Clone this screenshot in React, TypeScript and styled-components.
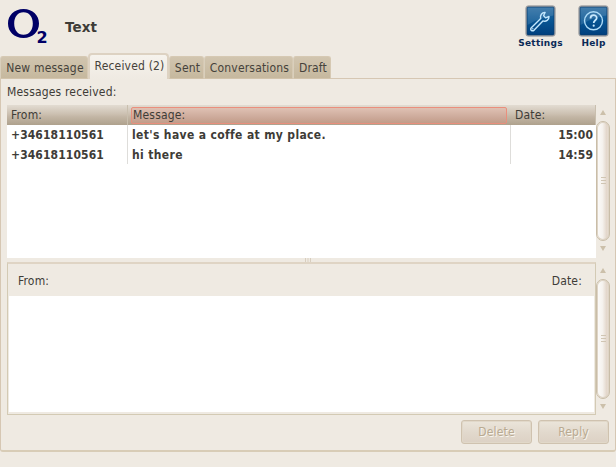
import React from "react";
import styled, { createGlobalStyle, css } from "styled-components";

const Global = createGlobalStyle`
  * { box-sizing: border-box; }
  body { margin: 0; background: #efeae2; overflow: hidden; }
`;

const Window = styled.main`
  width: 616px;
  height: 467px;
  display: flex;
  flex-direction: column;
  background: #efeae2;
  color: #3e3c37;
  font: 12px/20px "DejaVu Sans Condensed", "DejaVu Sans", sans-serif;
  letter-spacing: 0.18px;
  white-space: nowrap;
`;

const Header = styled.header`
  height: 53px;
  flex: none;
  display: flex;
  align-items: flex-start;
`;

const Logo = styled.svg`
  width: 50px;
  height: 50px;
  display: block;

  text { font: bold 16px "DejaVu Sans", sans-serif; letter-spacing: 0; }
`;

const Title = styled.h1`
  flex: 1;
  margin: 17px 0 0 15px;
  font: bold 13.5px/20px "DejaVu Sans", sans-serif;
  letter-spacing: 0.1px;
`;

const Action = styled.button<{ $width: number }>`
  width: ${(p) => p.$width}px;
  padding: 5px 0 0;
  border: 0;
  background: none;
  display: flex;
  flex-direction: column;
  align-items: center;
  color: #0b2a57;
  font: bold 9px/12px "DejaVu Sans", sans-serif;
  letter-spacing: 0.25px;

  svg { display: block; }
`;

const Tabs = styled.nav`
  height: 26px;
  flex: none;
  display: flex;
  align-items: flex-end;
  position: relative;
  z-index: 1;
`;

const Tab = styled.button<{ $width: number; $active?: boolean }>`
  width: ${(p) => p.$width}px;
  height: 23px;
  padding: 1px 0 0 2px;
  border: 1px solid #d6c9b3;
  border-left-color: #d9cfbc;
  border-bottom-color: #d2c3ab;
  border-radius: 3px 3px 0 0;
  background: linear-gradient(#d1c5af, #c6b89e);
  color: #45423b;
  font: inherit;
  letter-spacing: inherit;
  line-height: 20px;
  text-align: center;
  ${(p) =>
    p.$active &&
    css`
      height: 26px;
      padding: 0 0 3px 2px;
      border: 2px solid #ddd2c2;
      border-bottom: 0;
      border-radius: 4px 4px 0 0;
      background: linear-gradient(#f6f3ed, #efeae2);
    `}
`;

const Page = styled.section`
  height: 374px;
  flex: none;
  margin-top: -1px;
  padding: 3px 5px 0 5px;
  border: 1px solid #d6c7b3;
  border-bottom: 2px solid #d8ccb6;
  border-radius: 0 0 3px 3px;
`;

const Caption = styled.div`
  height: 23px;
  padding-left: 1px;
`;

const Split = styled.div`
  display: flex;
`;

const List = styled.div`
  width: 589px;
  height: 153px;
  margin-left: 1px;
  background: #fff;
`;

const ListHead = styled.div`
  height: 20px;
  display: flex;
  background: linear-gradient(#e2dcd2, #ccc0b1 45%, #c2b5a4 60%, #aea18d);
`;

const HeadCell = styled.div<{ $width: number }>`
  width: ${(p) => p.$width}px;
  padding-left: 4px;
  border-right: 1px solid #c9bfae;
`;

const HotCell = styled.div`
  width: 376px;
  height: 17px;
  margin: 2px 4px 0 3px;
  padding-left: 1px;
  border: 1px solid #ea8f7d;
  border-radius: 2px;
  background: linear-gradient(#dfc1b3, #cdaa9b 60%, #c29d89);
  line-height: 15px;
`;

const Row = styled.div`
  height: 19.5px;
  display: flex;
  font-weight: bold;
`;

const Cell = styled.div<{ $width: number; $right?: boolean; $spacing?: number }>`
  width: ${(p) => p.$width}px;
  padding: 0 3px 0 4px;
  border-right: ${(p) => (p.$right ? "0" : "1px solid #deddda")};
  text-align: ${(p) => (p.$right ? "right" : "left")};
  letter-spacing: ${(p) => p.$spacing ?? 0.1}px;
`;

const Scroll = styled.div<{ $top: number }>`
  width: 14px;
  height: 152px;
  display: flex;
  flex-direction: column;
  align-items: center;
  justify-content: space-between;
  padding: ${(p) => p.$top}px 0 ${(p) => 11 - p.$top}px;
`;

const Arrow = styled.i<{ $down?: boolean }>`
  border: 3px solid transparent;
  ${(p) =>
    p.$down
      ? "border-top: 5px solid #ccc0aa; border-bottom: 0;"
      : "border-bottom: 5px solid #ccc0aa; border-top: 0;"}
`;

const Thumb = styled.div`
  width: 14px;
  height: 120px;
  display: flex;
  align-items: center;
  justify-content: center;
  border: 1px solid #c9bda8;
  border-radius: 7px;
  box-shadow: inset 0 0 0 1px #ded4c5;
  background: linear-gradient(90deg, #fcfbfa, #f5f2ee 45%, #e3d7cb 80%, #e8dfd5);
`;

const Grip = styled.span`
  width: 5px;
  height: 7px;
  border: solid #d0c5b3;
  border-width: 1px 0;
  display: flex;
  align-items: center;

  &::after { content: ""; width: 5px; height: 1px; background: #d0c5b3; }
`;

const Divider = styled.div`
  width: 589px;
  height: 4px;
  margin-left: 1px;
  padding-left: 298px;
  display: flex;
  gap: 1px;

  i { width: 1px; height: 4px; background: #d8cebf; }
  i:nth-child(2) { width: 2px; background: #e5ddd1; }
`;

const Detail = styled.div`
  width: 589px;
  height: 153px;
  margin-left: 1px;
  padding: 0 1px 1px;
  border: 1px solid #d3cab4;
  border-top: 2px solid #dfd4c4;
`;

const DetailHead = styled.div`
  height: 32px;
  padding: 7px 12px 0 9px;
  display: flex;
  justify-content: space-between;
`;

const Body = styled.div`
  height: 116px;
  background: #fff;
`;

const Buttons = styled.div`
  display: flex;
  justify-content: flex-end;
  gap: 6px;
  padding: 5px 1px 0 0;
`;

const Push = styled.button`
  width: 71px;
  height: 24px;
  padding: 0 0 1px;
  border: 1px solid #cfc2af;
  border-radius: 3px;
  box-shadow: inset 0 0 0 1px #e1d8c9;
  background: linear-gradient(#ebe5da, #e1d8cc 55%, #dcd1c4);
  color: #b9aa91;
  text-shadow: 1px 1px #f8f5ee;
  font: inherit;
  letter-spacing: inherit;
`;

const messages = [
  { from: "+34618110561", text: "let's have a coffe at my place.", date: "15:00" },
  { from: "+34618110561", text: "hi there", date: "14:59" },
];

const tabs = [
  { label: "New message", width: 88 },
  { label: "Received (2)", width: 81, active: true },
  { label: "Sent", width: 35 },
  { label: "Conversations", width: 89 },
  { label: "Draft", width: 38 },
];

function Tile({ id, children }: { id: string; children: React.ReactNode }) {
  return (
    <svg width="31" height="32" viewBox="0 0 31 32" fill="none">
      <defs>
        <linearGradient id={id} x2="0" y2="1">
          <stop stopColor="#2b6da2" />
          <stop offset=".5" stopColor="#075593" />
          <stop offset="1" stopColor="#003f7d" />
        </linearGradient>
      </defs>
      <rect x=".8" y=".8" width="29.4" height="30.4" rx="2.5" fill="#b6b2b2" stroke="#96989b" strokeWidth=".8" />
      <rect x="2" y="2" width="27" height="28" rx="1" fill={`url(#${id})`} stroke="#0c3d6c" strokeWidth=".7" />
      <path d="M2.5 2.5h26v8Q15 12 2.5 20Z" fill="#fff" opacity=".12" />
      {children}
    </svg>
  );
}

function Scrollbar({ top }: { top: number }) {
  return (
    <Scroll $top={top}>
      <Arrow />
      <Thumb><Grip /></Thumb>
      <Arrow $down />
    </Scroll>
  );
}

export default function App() {
  return (
    <Window>
      <Global />
      <Header>
        <Logo viewBox="0 0 50 50" fill="#000066">
          <path
            fillRule="evenodd"
            d="M23.5 9C14 9 8 15.5 8 23.5S14 38 23.5 38 39 31.5 39 23.5 33 9 23.5 9Zm0 3.3c5.8 0 9.3 4.6 9.3 11.2s-3.5 11.2-9.3 11.2-9.3-4.6-9.3-11.2 3.5-11.2 9.3-11.2Z"
          />
          <text x="36.6" y="43">2</text>
        </Logo>
        <Title>Text</Title>
        <Action $width={61}>
          <Tile id="settings">
            <path
              d="M6.3 22.7 15.7 13.5C14.7 10.3 17 7.3 20.1 7.5L18.6 10.5 20.5 12.9 24 11.5C24.2 14.7 21 17.2 17.9 15.9L9.2 25.1C7.2 26.8 4.5 24.8 6.3 22.7Z"
              stroke="#c3e7fd" strokeWidth="1.4" strokeLinejoin="round"
            />
            <circle cx="7.8" cy="23.8" r=".7" fill="#b9e2fc" />
          </Tile>
          Settings
        </Action>
        <Action $width={45}>
          <Tile id="help">
            <circle cx="15.5" cy="15.8" r="9" stroke="#aedcf8" strokeWidth="1.4" />
            <path d="M12.5 13.5c-.1-4.4 6.3-4.2 6.2-.6 0 2.3-3 2.4-3 5.2" stroke="#c8e9fd" strokeWidth="1.8" />
            <circle cx="15.7" cy="20.7" r="1.1" fill="#c8e9fd" />
          </Tile>
          Help
        </Action>
      </Header>
      <Tabs>
        {tabs.map((t) => (
          <Tab key={t.label} $width={t.width} $active={t.active}>{t.label}</Tab>
        ))}
      </Tabs>
      <Page>
        <Caption>Messages received:</Caption>
        <Split>
          <List>
            <ListHead>
              <HeadCell $width={121}>From:</HeadCell>
              <HotCell>Message:</HotCell>
              <HeadCell $width={85}>Date:</HeadCell>
            </ListHead>
            {messages.map((m) => (
              <Row key={m.date}>
                <Cell $width={121}>{m.from}</Cell>
                <Cell $width={383} $spacing={0.36}>{m.text}</Cell>
                <Cell $width={85} $right>{m.date}</Cell>
              </Row>
            ))}
          </List>
          <Scrollbar top={5} />
        </Split>
        <Divider><i /><i /><i /></Divider>
        <Split>
          <Detail>
            <DetailHead><span>From:</span><span>Date:</span></DetailHead>
            <Body />
          </Detail>
          <Scrollbar top={6} />
        </Split>
        <Buttons>
          <Push disabled>Delete</Push>
          <Push disabled>Reply</Push>
        </Buttons>
      </Page>
    </Window>
  );
}
